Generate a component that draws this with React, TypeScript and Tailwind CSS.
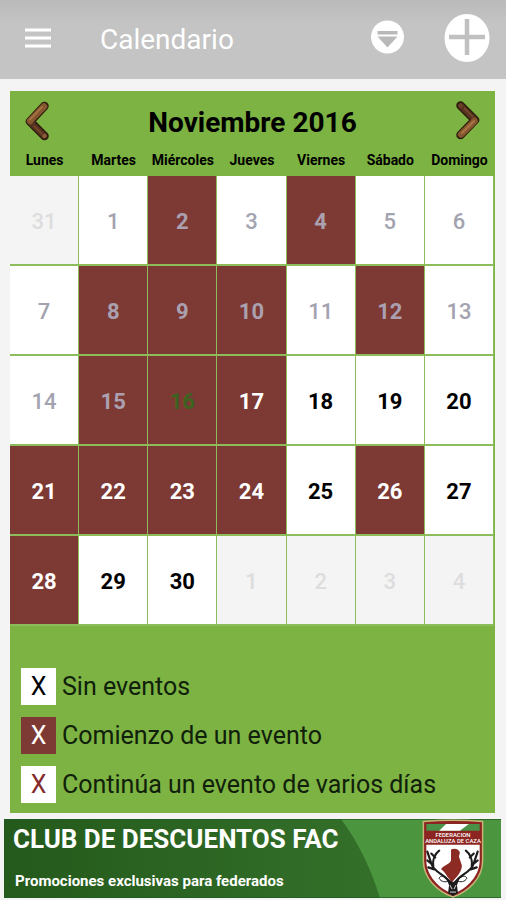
import clsx from 'clsx';

type DayKind = 'free' | 'event';
type DayTone = 'outside' | 'past' | 'today' | 'upcoming';

interface Day {
  label: number;
  kind: DayKind;
  tone: DayTone;
}

const WEEKDAYS = ['Lunes', 'Martes', 'Miércoles', 'Jueves', 'Viernes', 'Sábado', 'Domingo'];
const EVENT_DAYS = [2, 4, 8, 9, 10, 12, 15, 16, 17, 21, 22, 23, 24, 26, 28];
const TODAY = 16;
const DAYS_IN_MONTH = 30;

const getDay = (week: number, column: number): Day => {
  const day = week * 7 + column;
  if (day < 1) return { label: 31, kind: 'free', tone: 'outside' };
  if (day > DAYS_IN_MONTH) return { label: day - DAYS_IN_MONTH, kind: 'free', tone: 'outside' };
  return {
    label: day,
    kind: EVENT_DAYS.includes(day) ? 'event' : 'free',
    tone: day < TODAY ? 'past' : day === TODAY ? 'today' : 'upcoming',
  };
};

const WEEKS = [0, 1, 2, 3, 4].map((week) => WEEKDAYS.map((_, column) => getDay(week, column)));

const LEGEND = [
  { text: 'Sin eventos', className: 'bg-white text-black' },
  { text: 'Comienzo de un evento', className: 'bg-[#7d3933] text-white' },
  { text: 'Continúa un evento de varios días', className: 'bg-white text-[#842c2c]' },
];

const dayClass = ({ kind, tone }: Day) =>
  clsx(
    'block h-[88px] w-full pt-[2px] text-[22px]',
    kind === 'free' && tone !== 'upcoming' ? 'font-medium' : 'font-bold',
    tone === 'outside' && 'bg-[#f4f4f4] text-[#dddddd]',
    tone !== 'outside' && (kind === 'event' ? 'bg-[#7d3933]' : 'bg-white'),
    tone === 'past' && (kind === 'event' ? 'text-[#aaa0b0]' : 'text-[#a3a3b0]'),
    tone === 'today' && 'text-[#3c6420]',
    tone === 'upcoming' && (kind === 'event' ? 'text-white' : 'text-black')
  );

const BranchArrow = ({ direction }: { direction: 'left' | 'right' }) => (
  <svg width="24" height="40" viewBox="0 0 24 40" fill="none" aria-hidden="true">
    {direction === 'left' ? (
      <>
        <path d="M19.500 5 5 20.500 19.500 35" stroke="#2f1c0e" strokeWidth="8.500" strokeLinecap="round" strokeLinejoin="round" />
        <path d="M5 21 19 34.500" stroke="#563420" strokeWidth="5.500" strokeLinecap="round" />
        <path d="M19 5.500 5 20" stroke="#86572f" strokeWidth="6.500" strokeLinecap="round" />
        <path d="M17 6 5 18.500" stroke="#ab7648" strokeWidth="1.800" strokeLinecap="round" />
        <path d="m9 25 8 8" stroke="#7b4b2c" strokeWidth="1.200" />
        <circle cx="19.500" cy="35" r="2.200" fill="#8c5c38" />
      </>
    ) : (
      <>
        <path d="M4.500 4.500 19 19 4.500 34" stroke="#2f1c0e" strokeWidth="8.500" strokeLinecap="round" strokeLinejoin="round" />
        <path d="M5 5 18.500 18.500" stroke="#563420" strokeWidth="5.500" strokeLinecap="round" />
        <path d="M18.500 20 5 33.500" stroke="#86572f" strokeWidth="6.500" strokeLinecap="round" />
        <path d="M18 20 6 32" stroke="#ab7648" strokeWidth="1.800" strokeLinecap="round" />
        <path d="m8 7 9 9" stroke="#7b4b2c" strokeWidth="1.200" />
        <circle cx="4.500" cy="4.500" r="2.200" fill="#6a4227" />
      </>
    )}
  </svg>
);

const FederationShield = () => (
  <svg width="64" height="79" viewBox="0 0 64 80" className="shrink-0" role="img" aria-label="Federación Andaluza de Caza">
    <path d="M2 2.500Q32 0 62 2.500V42C62 60 48 73 32 79 16 73 2 60 2 42Z" fill="#8c2522" stroke="#c9b477" strokeWidth="1.500" />
    <path d="M5 5H59V12H5Z" fill="#4a9247" />
    <path d="M25 5H48L39 12H18Z" fill="#fff" />
    <path d="M5 26H59V42C59 57 47 70 32 76 17 70 5 57 5 42Z" fill="#fff" />
    <text x="32" y="18" textAnchor="middle" fontFamily="Roboto, sans-serif" fontSize="6" fontWeight="500" fill="#fff">FEDERACION</text>
    <text x="32" y="24" textAnchor="middle" fontFamily="Roboto, sans-serif" fontSize="6" fontWeight="500" fill="#fff">ANDALUZA DE CAZA</text>
    <path d="M30 31C33 29 38 30 39 34L38 38 41 47C41 54 35 59 31 64L26 58C24 54 22 53 20 51 21 47 29 46 30 42Z" fill="#8c2a24" />
    <g fill="none" stroke="#1c1c1c" strokeLinecap="round" strokeLinejoin="round">
      <path d="M29 65C25 56 13 55 10 45L6 33M11 46 6 42M12 48C11 41 14 35 18 32M13 51 7 49M14 39 10 35" strokeWidth="2.200" />
      <path d="M34 65C38 56 50 55 53 45L57 33M52 46 57 42M51 48C52 41 49 35 45 32M50 51 56 49M49 39 53 35" strokeWidth="2.200" />
      <path d="M28 62C23 57 19 57 18 60 20 64 24 64 28 63M36 62C41 57 45 57 46 60 44 64 40 64 36 63" strokeWidth="1" />
    </g>
    <path d="M25 59 32 64 39 59 36 67 37 75 32 78 27 75 28 67Z" fill="#1c1c1c" />
    <path d="m29 67 2 4M35 67l-2 4M29 74h6" stroke="#ddd" strokeWidth="1" />
  </svg>
);

const Header = () => (
  <header className="flex h-[79px] items-center bg-linear-to-b from-[#bababa] to-[#c4c4c4] to-30% pr-4 pb-1 pl-6 text-white">
    <button type="button" aria-label="Menú">
      <svg width="28" height="22" viewBox="0 0 28 22" stroke="currentColor" strokeWidth="2.800" aria-hidden="true">
        <path d="M1 3H27M1 11H27M1 19H27" />
      </svg>
    </button>
    <h1 className="ml-12 flex-1 pt-1 text-[28px] leading-8">Calendario</h1>
    <button type="button" aria-label="Filtrar">
      <svg width="34" height="36" viewBox="0 0 34 36" aria-hidden="true">
        <circle cx="17.500" cy="17" r="16.500" fill="#fff" />
        <path d="M7.500 11H27.500V14.500H7.500ZM7.500 16.500H27.500L17.500 27.500Z" fill="#b9b9b9" />
      </svg>
    </button>
    <button type="button" aria-label="Añadir evento" className="ml-10">
      <svg width="46" height="48" viewBox="0 0 46 48" aria-hidden="true">
        <ellipse cx="23" cy="24" rx="22.500" ry="24" fill="#fff" />
        <path d="M23 5V41M5 23H41" stroke="#c0c0c0" strokeWidth="4.500" />
      </svg>
    </button>
  </header>
);

const Calendar = () => (
  <section className="bg-[#7cb342] pb-[10px]">
    <div className="flex h-[60px] items-center justify-between px-[15px]">
      <button type="button" aria-label="Mes anterior">
        <BranchArrow direction="left" />
      </button>
      <h2 className="pt-1 text-[28px] font-bold text-black">Noviembre 2016</h2>
      <button type="button" aria-label="Mes siguiente">
        <BranchArrow direction="right" />
      </button>
    </div>
    <div className="pr-px">
      <table className="w-full table-fixed border-separate border-spacing-0">
        <thead>
          <tr>
            {WEEKDAYS.map((name) => (
              <th key={name} scope="col" className="h-[25px] p-0 pb-2 text-center text-sm leading-4 font-bold text-black">
                {name}
              </th>
            ))}
          </tr>
        </thead>
        <tbody>
          {WEEKS.map((week, index) => (
            <tr key={index}>
              {week.map((day) => (
                <td key={day.label} className="border-r border-b-2 border-[#8dbd5b] p-0">
                  <button type="button" className={dayClass(day)}>
                    {day.label}
                  </button>
                </td>
              ))}
            </tr>
          ))}
        </tbody>
      </table>
    </div>
    <ul className="mt-[42px] space-y-3 px-[11px]">
      {LEGEND.map(({ text, className }) => (
        <li key={text} className="flex items-center gap-[6px] text-[25px] leading-[37px] text-[#10200a]">
          <span className={clsx('w-[35px] text-center', className)}>X</span>
          {text}
        </li>
      ))}
    </ul>
  </section>
);

const DiscountBanner = () => (
  <a href="#descuentos" className="relative flex h-[79px] items-center justify-between bg-[#4b953f] pr-4 text-white">
    <svg className="absolute inset-0 h-full w-full" viewBox="0 0 497 80" preserveAspectRatio="none" aria-hidden="true">
      <defs>
        <linearGradient id="banner">
          <stop offset="0" stopColor="#245a1c" />
          <stop offset="1" stopColor="#34702a" />
        </linearGradient>
      </defs>
      <path d="M0 0H337Q362 34 376 80H0Z" fill="url(#banner)" />
      <path d="M0 .5H497M0 79.500H497M.5 0V80" stroke="#1d5a23" strokeOpacity=".7" />
    </svg>
    <div className="relative self-stretch pt-2 pl-[9px] font-bold whitespace-nowrap">
      <p className="text-[26px] leading-6">CLUB DE DESCUENTOS FAC</p>
      <p className="mt-5 pl-[2px] text-[15px] leading-5">Promociones exclusivas para federados</p>
    </div>
    <div className="relative">
      <FederationShield />
    </div>
  </a>
);

export default function App() {
  return (
    <div className="min-h-screen bg-[#f4f4f4] font-[Roboto,sans-serif]">
      <Header />
      <main className="pt-3 pr-[11px] pl-[10px]">
        <Calendar />
      </main>
      <footer className="pt-[6px] pr-[5px] pl-1">
        <DiscountBanner />
      </footer>
    </div>
  );
}
